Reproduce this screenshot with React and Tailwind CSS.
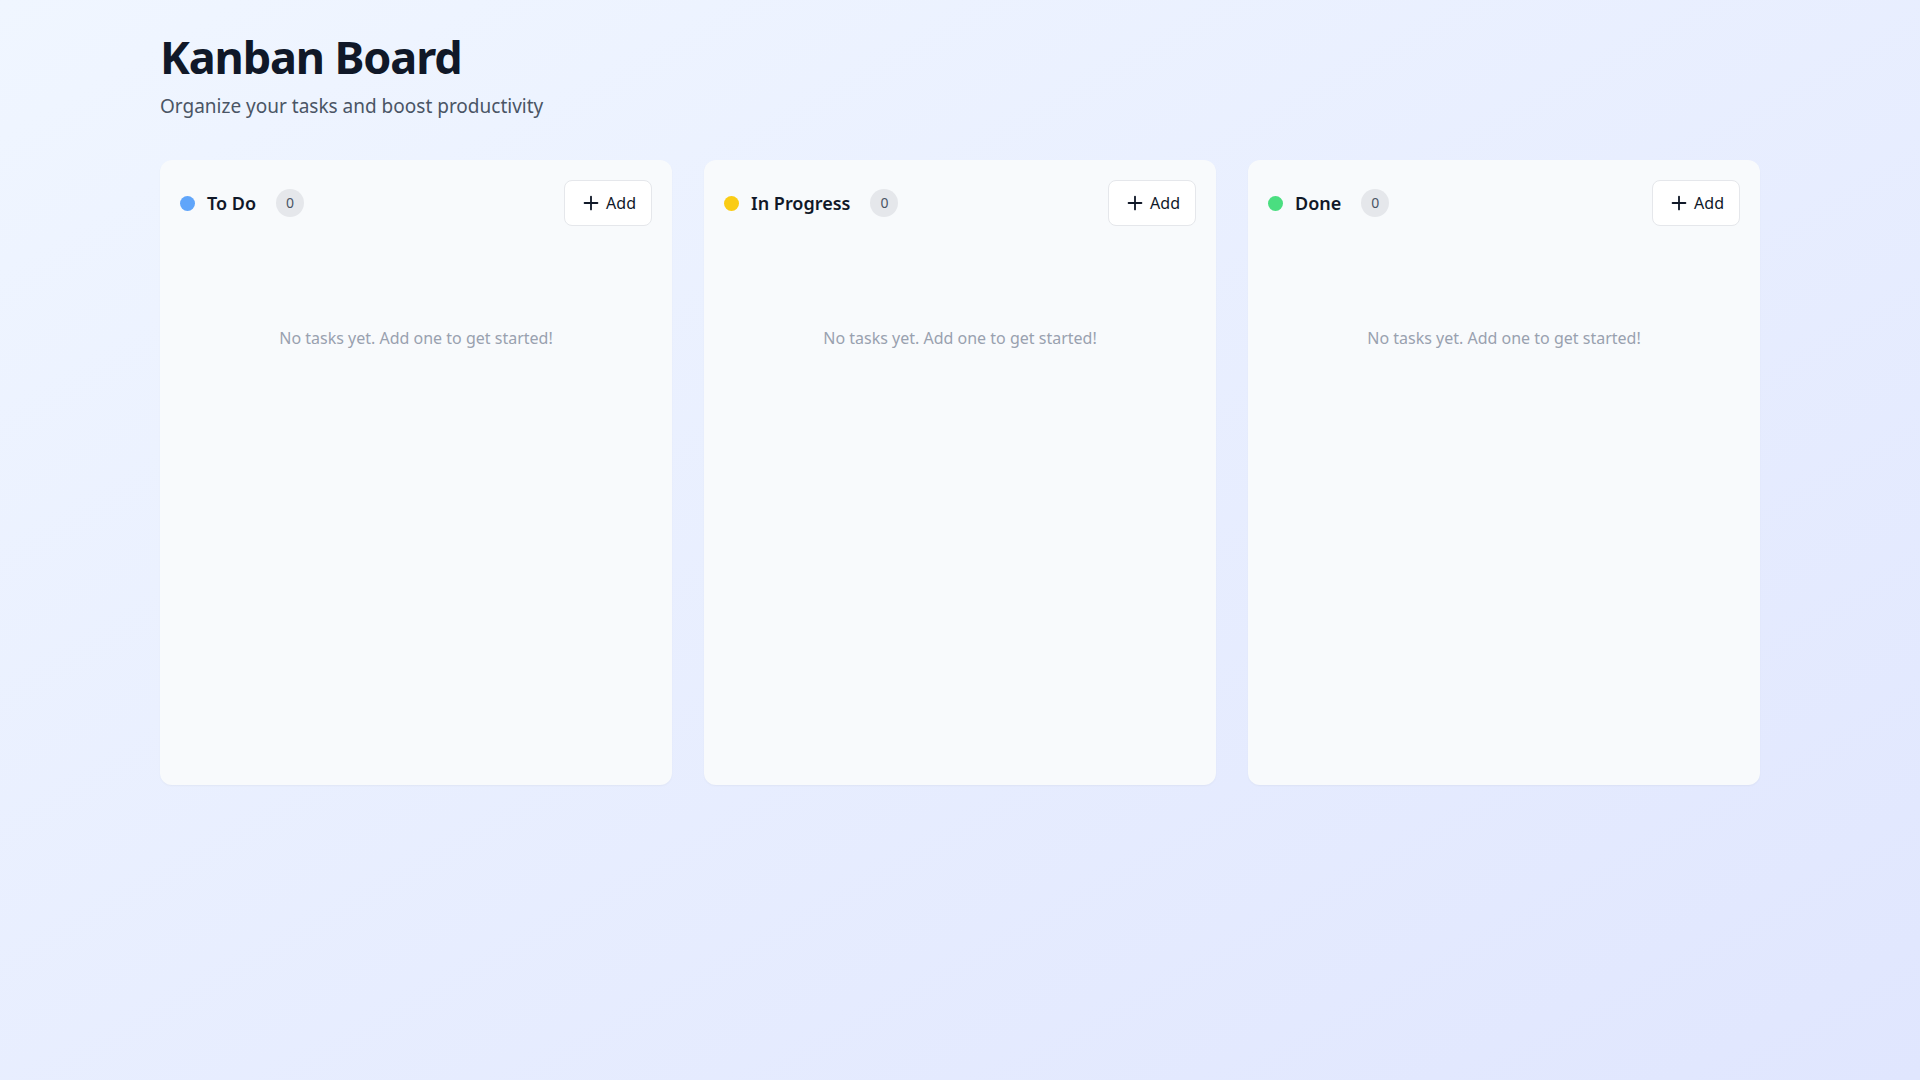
import React from "react";
import { Plus } from "lucide-react";

const columns = [
  { id: "todo", title: "To Do", dot: "bg-[#60a5fa]" },
  { id: "progress", title: "In Progress", dot: "bg-[#facc15]" },
  { id: "done", title: "Done", dot: "bg-[#4ade80]" },
];

const Column = ({ title, dot }) => (
  <div className="bg-[#f8fafc] rounded-xl shadow-[0_1px_2px_rgba(0,0,0,0.04)] p-5 min-h-[625px]">
    {/* Header */}
    <div className="flex items-center justify-between">
      <div className="flex items-center gap-3">
        <span className={`w-[15px] h-[15px] rounded-full ${dot}`} />
        <h2 className="text-lg font-semibold text-gray-900">{title}</h2>
        <span className="ml-2 h-7 min-w-[27px] px-2.5 rounded-full bg-gray-200 text-gray-600 text-sm flex items-center justify-center">
          0
        </span>
      </div>
      <button className="h-[46px] flex items-center gap-1 px-[15px] bg-white border border-gray-200 rounded-lg text-base text-gray-900">
        <Plus size={22} strokeWidth={2} />
        Add
      </button>
    </div>

    {/* Empty state */}
    <div className="mt-[100px] text-center text-base text-gray-400">
      No tasks yet. Add one to get started!
    </div>
  </div>
);

export default function App() {
  return (
    <div
      className="min-h-screen bg-linear-to-br from-[#f0f6ff] to-[#e0e6fe]"
      style={{ fontFamily: '"Noto Sans", "Open Sans", sans-serif' }}
    >
      <div className="max-w-[1600px] mx-auto pt-[34px] pb-8">
        <h1 className="text-[45px] font-bold tracking-tight text-gray-900 leading-none">Kanban Board</h1>
        <p className="mt-[13px] text-[19px] leading-7 text-gray-600">Organize your tasks and boost productivity</p>

        <div className="mt-10 grid grid-cols-3 gap-8">
          {columns.map((c) => (
            <Column key={c.id} title={c.title} dot={c.dot} />
          ))}
        </div>
      </div>
    </div>
  );
}
